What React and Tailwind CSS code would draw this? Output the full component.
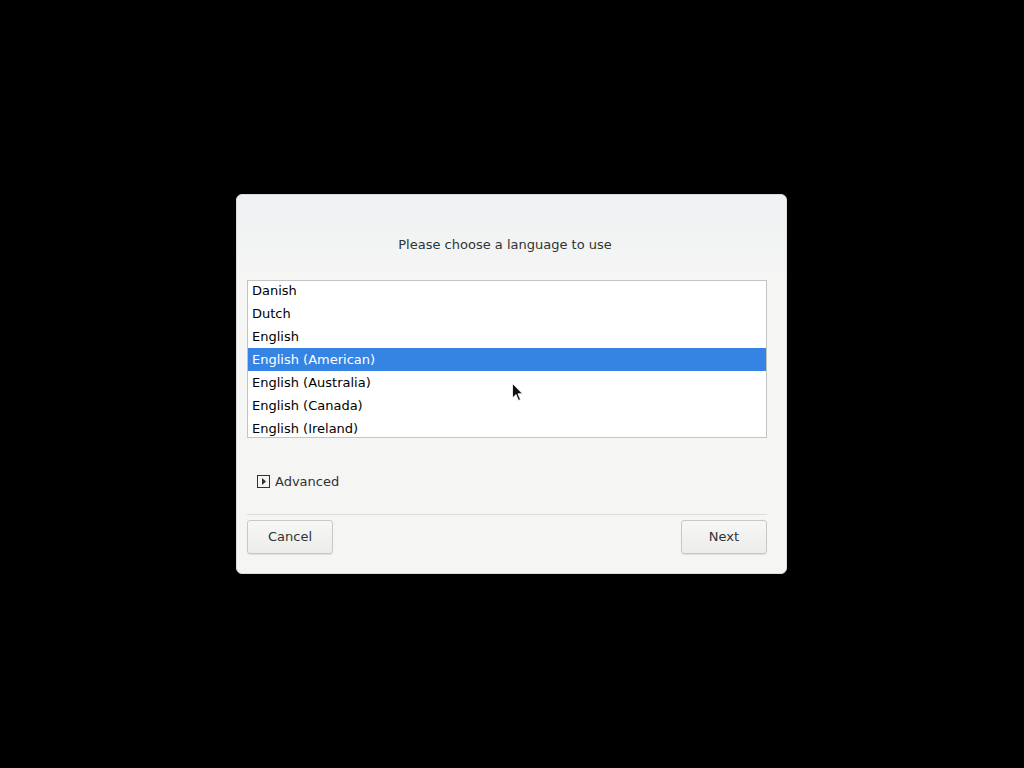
export default function App() {
  const langs = [
    "Danish",
    "Dutch",
    "English",
    "English (American)",
    "English (Australia)",
    "English (Canada)",
    "English (Ireland)",
  ];
  return (
    <div
      className="w-[1024px] h-[768px] bg-black relative"
      style={{ fontFamily: '"DejaVu Sans", sans-serif' }}
    >
      <div className="absolute left-[236px] top-[194px] w-[551px] h-[380px] rounded-[6px] bg-[#f5f5f4] border border-[#dcdcda] flex flex-col pl-[10px] pr-[19px] text-[13px] text-[#2e3436]">
        <div className="h-[85px] flex items-start justify-center pt-[40px] pr-[4px] rounded-t-[6px] bg-gradient-to-b from-[#eef2f2] to-[#f5f5f4] -ml-[10px] -mr-[19px]">
          <span className="leading-[20px] pr-[9px]">Please choose a language to use</span>
        </div>
        <div className="h-[158px] bg-white border border-[#c4c4c2] overflow-hidden">
          <div className="-mt-[2px]">
            {langs.map((l, i) => (
              <div
                key={l}
                className={
                  "h-[23px] flex items-center px-[4px] " +
                  (i === 3 ? "bg-[#3584e4] text-white" : "text-black")
                }
              >
                {l}
              </div>
            ))}
          </div>
        </div>
        <div className="h-[77px] flex items-center pl-[10px] pt-[20px] pb-[9px] border-b border-[#dcdcda]">
          <div className="flex items-center gap-[5px]">
            <div className="w-[13px] h-[13px] border border-[#2e3436] flex items-center justify-center">
              <svg width="7" height="9" viewBox="0 0 7 9">
                <path d="M2 1 L6 4.5 L2 8 Z" fill="#2e3436" />
              </svg>
            </div>
            <span>Advanced</span>
          </div>
        </div>
        <div className="flex justify-between pt-[5px]">
          <button className="w-[86px] h-[34px] rounded-[3px] border border-[#c8c8c6] bg-gradient-to-b from-[#f7f7f6] to-[#ececeb] text-[13px] text-[#2e3436] shadow-[0_1px_0_rgba(0,0,0,0.08)]">
            Cancel
          </button>
          <button className="w-[86px] h-[34px] rounded-[3px] border border-[#c8c8c6] bg-gradient-to-b from-[#f7f7f6] to-[#ececeb] text-[13px] text-[#2e3436] shadow-[0_1px_0_rgba(0,0,0,0.08)]">
            Next
          </button>
        </div>
      </div>
      <svg
        className="absolute left-[512px] top-[383px]"
        width="12"
        height="20"
        viewBox="0 0 12 20"
      >
        <path
          d="M0.5 0.5 L0.5 15 L4 11.5 L6.5 17.5 L8.5 16.5 L6 10.8 L10.5 10.8 Z"
          fill="#111"
          stroke="#fff"
          strokeWidth="0.8"
        />
      </svg>
    </div>
  );
}
